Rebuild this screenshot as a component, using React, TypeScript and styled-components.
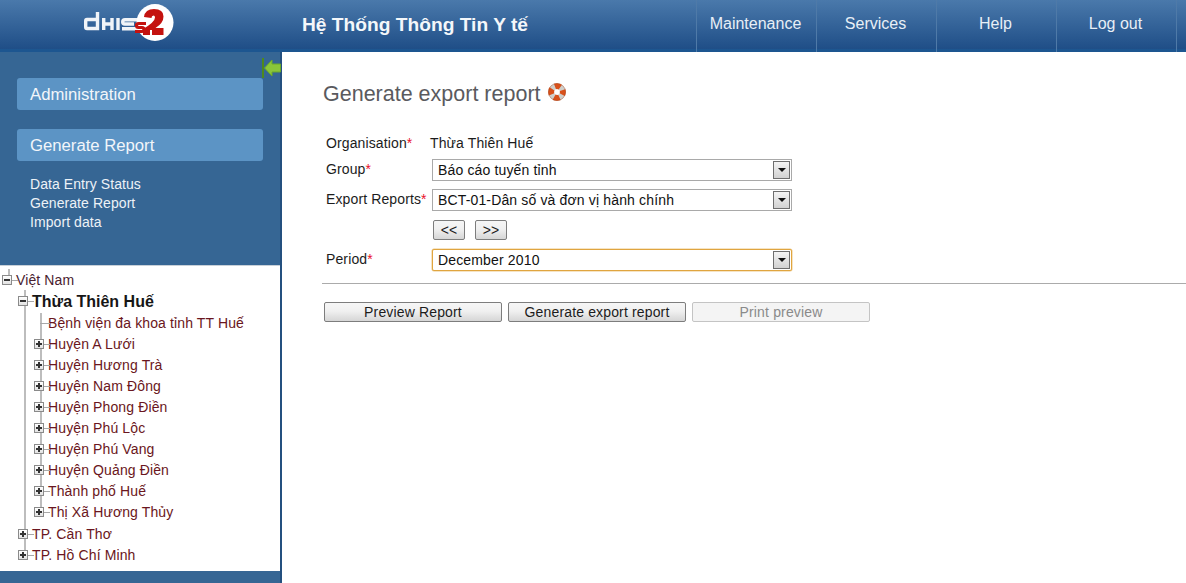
import React from "react";
import styled, { createGlobalStyle } from "styled-components";

const Global = createGlobalStyle`
  html, body { margin: 0; padding: 0; height: 100%; background: #fff; overflow: hidden; }
  body { font-family: "Liberation Sans", Arial, sans-serif; }
`;

const Page = styled.div`
  width: 1186px;
  height: 583px;
  display: flex;
  flex-direction: column;
  overflow: hidden;
`;

const Header = styled.header`
  height: 49px;
  flex: none;
  display: flex;
  background: linear-gradient(#4a79ab, #1f4e87);
  border-bottom: 3px solid #1d5690;
`;

const LogoArea = styled.div`
  width: 302px;
  flex: none;
  padding-left: 84px;
  box-sizing: border-box;
  display: flex;
  align-items: flex-start;
  padding-top: 3px;
`;

const Title = styled.div`
  width: 394px;
  flex: none;
  font-size: 19.2px;
  font-weight: bold;
  color: #f4f7fa;
  line-height: 50px;
`;

const Nav = styled.nav`
  display: flex;
  height: 52px;
`;

const NavItem = styled.div`
  width: 120px;
  height: 52px;
  box-sizing: border-box;
  border-left: 1px solid #4f7aa8;
  padding-right: 2px;
  text-align: center;
  font-size: 16px;
  line-height: 48px;
  color: #e8eff6;
`;

const Body = styled.div`
  flex: 1;
  display: flex;
  min-height: 0;
`;

const Sidebar = styled.aside`
  width: 280px;
  flex: none;
  background: #366694;
  border-right: 2px solid #24507f;
  display: flex;
  flex-direction: column;
  position: relative;
`;

const Collapse = styled.svg`
  position: absolute;
  left: 262px;
  top: 6px;
`;

const Menu = styled.div`
  padding: 26px 17px 0 17px;
  height: 213px;
  box-sizing: border-box;
  flex: none;
`;

const MenuHead = styled.div`
  width: 246px;
  height: 32px;
  margin-bottom: 19px;
  background: #5c94c5;
  border-radius: 3px;
  color: #f2f6fa;
  font-size: 16.7px;
  line-height: 33px;
  padding-left: 13px;
  box-sizing: border-box;
`;

const MenuLinks = styled.div`
  margin-top: -5px;
  padding-left: 13px;
`;

const MenuLink = styled.div`
  font-size: 14px;
  line-height: 19px;
  letter-spacing: 0.07px;
  color: #edf2f7;
`;

const TreeBox = styled.div`
  height: 306px;
  flex: none;
  background: #fff;
  border-top: 1px solid #c8d0d8;
  box-sizing: border-box;
  position: relative;
  padding-top: 4px;
`;

const Rows = styled.div`
  display: flex;
  flex-direction: column;
`;

const Children = styled.div`
  display: flex;
  flex-direction: column;
  margin-bottom: 1px;
`;

const Row = styled.div<{ $level: number; $root?: boolean }>`
  height: 21px;
  position: relative;
  padding-left: ${(p) => 16 + p.$level * 16}px;
  font-size: 14px;
  letter-spacing: 0.12px;
  line-height: 21px;
  color: ${(p) => (p.$root ? "#4a2230" : "#6a1620")};
  white-space: nowrap;

  &::before {
    content: "";
    position: absolute;
    left: ${(p) => 8 + p.$level * 16}px;
    top: 10px;
    width: 10px;
    height: 1px;
    background: #a8a8a8;
  }
`;

const BoldRow = styled(Row)`
  height: 22px;
  font-size: 16px;
  font-weight: bold;
  line-height: 22px;
  letter-spacing: 0;
  color: #161616;
`;

const VLine = styled.div<{ $x: number; $top: number; $h: number }>`
  position: absolute;
  left: ${(p) => p.$x}px;
  top: ${(p) => p.$top}px;
  width: 2px;
  height: ${(p) => p.$h}px;
  background: #bdbdbd;
`;

const Toggle = styled.span<{ $level: number }>`
  position: absolute;
  z-index: 1;
  left: ${(p) => 2 + p.$level * 16}px;
  top: 5px;
  width: 8px;
  height: 8px;
  border: 1px solid #8a8a8a;
  background: linear-gradient(#fff, #e2e2e2);
  display: block;
`;

const ToggleBar = styled.span<{ $v?: boolean }>`
  position: absolute;
  background: #333;
  left: ${(p) => (p.$v ? 3 : 1)}px;
  top: ${(p) => (p.$v ? 1 : 3)}px;
  width: ${(p) => (p.$v ? 2 : 6)}px;
  height: ${(p) => (p.$v ? 6 : 2)}px;
`;

const Main = styled.main`
  flex: 1;
  padding: 28px 0 0 41px;
  min-width: 0;
`;

const Heading = styled.h1`
  margin: 0 0 21px 0;
  font-size: 21.5px;
  font-weight: normal;
  color: #5a5a5e;
  line-height: 28px;
  display: flex;
  align-items: center;
  gap: 7px;
`;

const HelpIcon = styled.svg`
  margin-top: -5px;
`;

const Form = styled.div`
  padding-left: 3px;
  display: grid;
  grid-template-columns: 106px 360px;
  font-size: 14px;
  letter-spacing: 0.12px;
  color: #1c1c1c;
  grid-template-rows: 30px 30px 30px 30px 30px;
`;

const Label = styled.div<{ $y?: number }>`
  line-height: 20px;
  padding-top: ${(p) => p.$y ?? 0}px;
`;

const Star = styled.span`
  color: #e8102a;
`;

const Value = styled.div`
  line-height: 20px;
  padding-top: 4px;
  margin-left: -2px;
`;

const SelectBox = styled.div<{ $focus?: boolean }>`
  width: 360px;
  height: 22px;
  box-sizing: border-box;
  border: ${(p) => (p.$focus ? "1px solid #e0a53f" : "1px solid #a9a9a9")};
  box-shadow: ${(p) => (p.$focus ? "0 0 0 0.5px #eec98a" : "none")};
  border-radius: ${(p) => (p.$focus ? "2px" : "0")};
  background: #fff;
  display: flex;
  align-items: center;
  justify-content: space-between;
  padding: 0 1px 0 5px;
  font-size: 14px;
  letter-spacing: 0.15px;
  color: #111;
`;

const SelectArrow = styled.span`
  width: 17px;
  height: 18px;
  box-sizing: border-box;
  border: 1px solid #6e6e6e;
  background: linear-gradient(#f4f4f4, #d2d2d2);
  display: flex;
  align-items: center;
  justify-content: center;
`;

const ArrowTri = styled.span`
  width: 0;
  height: 0;
  border-left: 4px solid transparent;
  border-right: 4px solid transparent;
  border-top: 4px solid #111;
`;

const PagerCell = styled.div`
  display: flex;
  gap: 10px;
  padding-left: 1px;
  padding-top: 1px;
`;

const GrayButton = styled.button<{ $w: number; $h: number; $off?: boolean }>`
  width: ${(p) => p.$w}px;
  height: ${(p) => p.$h}px;
  padding: 0;
  box-sizing: border-box;
  border: 1px solid ${(p) => (p.$off ? "#c4c4c4" : "#7d7d7d")};
  border-radius: 2px;
  background: ${(p) => (p.$off ? "#f4f4f4" : "linear-gradient(#f6f6f6 0%, #f0f0f0 45%, #d6d6d6 100%)")};
  color: ${(p) => (p.$off ? "#8a8a8a" : "#1c1c1c")};
  font-family: "Liberation Sans", Arial, sans-serif;
  font-size: 14px;
  letter-spacing: 0.15px;
  line-height: 1;
`;

const Rule = styled.hr`
  margin: 4px 0 18px -1px;
  border: 0;
  height: 1px;
  background: #ababab;
`;

const Actions = styled.div`
  display: flex;
  gap: 6px;
  margin-left: 1px;
`;

const Spacer = styled.div``;

const Lifebuoy = () => (
  <HelpIcon width="18" height="18" viewBox="0 0 20 20">
    <circle cx="10" cy="10" r="6.500" fill="none" stroke="#cfcfcb" strokeWidth="6.500" />
    <circle cx="10" cy="10" r="6.500" fill="none" stroke="#d8501a" strokeWidth="6.500" strokeDasharray="6.200 4" strokeDashoffset="3.100" />
    <circle cx="10" cy="10" r="9.500" fill="none" stroke="#a03c14" strokeWidth="0.7" opacity="0.6" />
  </HelpIcon>
);

const Logo = () => (
  <svg width="92" height="44" viewBox="0 0 92 44">
    <g fill="none" stroke="#f1f4f8" strokeWidth="3.400">
      <path d="M13.500 9 V25.500 H3 Q1.700 25.500 1.700 24 V18 Q1.700 16.500 3 16.500 H13" />
      <path d="M19.700 15 V27 M19.700 21 H28 M28 15 V27" />
      <path d="M34 15 V27" />
      <path d="M54 16.700 H41 Q38.700 16.700 38.700 19 Q38.700 21 41 21 H50 M38 25.700 H54" />
    </g>
    <circle cx="71" cy="19.500" r="18.500" fill="#fff" />
    <path d="M62 20.500 H54.500 Q52.500 20.500 52.500 22.500 Q52.500 24.500 54.500 24.500 H58 Q60 24.500 60 26.500 Q60 28.500 58 28.500 H51" fill="none" stroke="#c4120f" strokeWidth="3.200" />
    <path d="M60 14 Q61 6 70 6 Q79.500 6 79.500 13.500 Q79.500 20 71.500 25 H79.500 V32 H59 V26 Q71 19 71 14.500 Q71 12.500 69.500 12.500 Q67.500 12.500 67.500 15 Z" fill="#c4120f" />
    <rect x="66" y="27" width="2" height="5" fill="#fff" />
  </svg>
);

type T = { name: string; t?: boolean };

const districts: T[] = [
  { name: "Bệnh viện đa khoa tỉnh TT Huế" },
  { name: "Huyện A Lưới", t: true },
  { name: "Huyện Hương Trà", t: true },
  { name: "Huyện Nam Đông", t: true },
  { name: "Huyện Phong Điền", t: true },
  { name: "Huyện Phú Lộc", t: true },
  { name: "Huyện Phú Vang", t: true },
  { name: "Huyện Quảng Điền", t: true },
  { name: "Thành phố Huế", t: true },
  { name: "Thị Xã Hương Thủy", t: true },
];

const Expander = ({ level, open }: { level: number; open?: boolean }) => (
  <Toggle $level={level}>
    <ToggleBar />
    {!open && <ToggleBar $v />}
  </Toggle>
);

const Select = ({ value, focus }: { value: string; focus?: boolean }) => (
  <SelectBox $focus={focus}>
    {value}
    <SelectArrow>
      <ArrowTri />
    </SelectArrow>
  </SelectBox>
);

export default function App() {
  return (
    <Page>
      <Global />
      <Header>
        <LogoArea>
          <Logo />
        </LogoArea>
        <Title>Hệ Thống Thông Tin Y tế</Title>
        <Nav>
          <NavItem>Maintenance</NavItem>
          <NavItem>Services</NavItem>
          <NavItem>Help</NavItem>
          <NavItem>Log out</NavItem>
          <NavItem />
        </Nav>
      </Header>
      <Body>
        <Sidebar>
          <Collapse width="20" height="20" viewBox="0 0 20 20">
            <rect x="0" y="0" width="2" height="20" fill="#4e8a1c" />
            <path d="M2.500 10 L10 2 V6 H18.500 V14 H10 V18 Z" fill="#8ac63a" stroke="#6aa82a" strokeWidth="1" />
          </Collapse>
          <Menu>
            <MenuHead>Administration</MenuHead>
            <MenuHead>Generate Report</MenuHead>
            <MenuLinks>
              <MenuLink>Data Entry Status</MenuLink>
              <MenuLink>Generate Report</MenuLink>
              <MenuLink>Import data</MenuLink>
            </MenuLinks>
          </Menu>
          <TreeBox>
            <VLine $x={8} $top={3} $h={6} />
            <VLine $x={24} $top={24} $h={265} />
            <VLine $x={40} $top={47} $h={200} />
            <Rows>
              <Row $level={0} $root>
                <Expander level={0} open />
                Việt Nam
              </Row>
              <BoldRow $level={1}>
                <Expander level={1} open />
                Thừa Thiên Huế
              </BoldRow>
              <Children>
                {districts.map((d) => (
                  <Row key={d.name} $level={2}>
                    {d.t && <Expander level={2} />}
                    {d.name}
                  </Row>
                ))}
              </Children>
              <Row $level={1}>
                <Expander level={1} />
                TP. Cần Thơ
              </Row>
              <Row $level={1}>
                <Expander level={1} />
                TP. Hồ Chí Minh
              </Row>
            </Rows>
          </TreeBox>
        </Sidebar>
        <Main>
          <Heading>
            Generate export report
            <Lifebuoy />
          </Heading>
          <Form>
            <Label $y={4}>
              Organisation<Star>*</Star>
            </Label>
            <Value>Thừa Thiên Huế</Value>
            <Label>
              Group<Star>*</Star>
            </Label>
            <Select value="Báo cáo tuyến tỉnh" />
            <Label>
              Export Reports<Star>*</Star>
            </Label>
            <Select value="BCT-01-Dân số và đơn vị hành chính" />
            <Spacer />
            <PagerCell>
              <GrayButton $w={32} $h={20}>&lt;&lt;</GrayButton>
              <GrayButton $w={32} $h={20}>&gt;&gt;</GrayButton>
            </PagerCell>
            <Label>
              Period<Star>*</Star>
            </Label>
            <Select value="December 2010" focus />
          </Form>
          <Rule />
          <Actions>
            <GrayButton $w={178} $h={20}>Preview Report</GrayButton>
            <GrayButton $w={178} $h={20}>Generate export report</GrayButton>
            <GrayButton $w={178} $h={20} $off>Print preview</GrayButton>
          </Actions>
        </Main>
      </Body>
    </Page>
  );
}
